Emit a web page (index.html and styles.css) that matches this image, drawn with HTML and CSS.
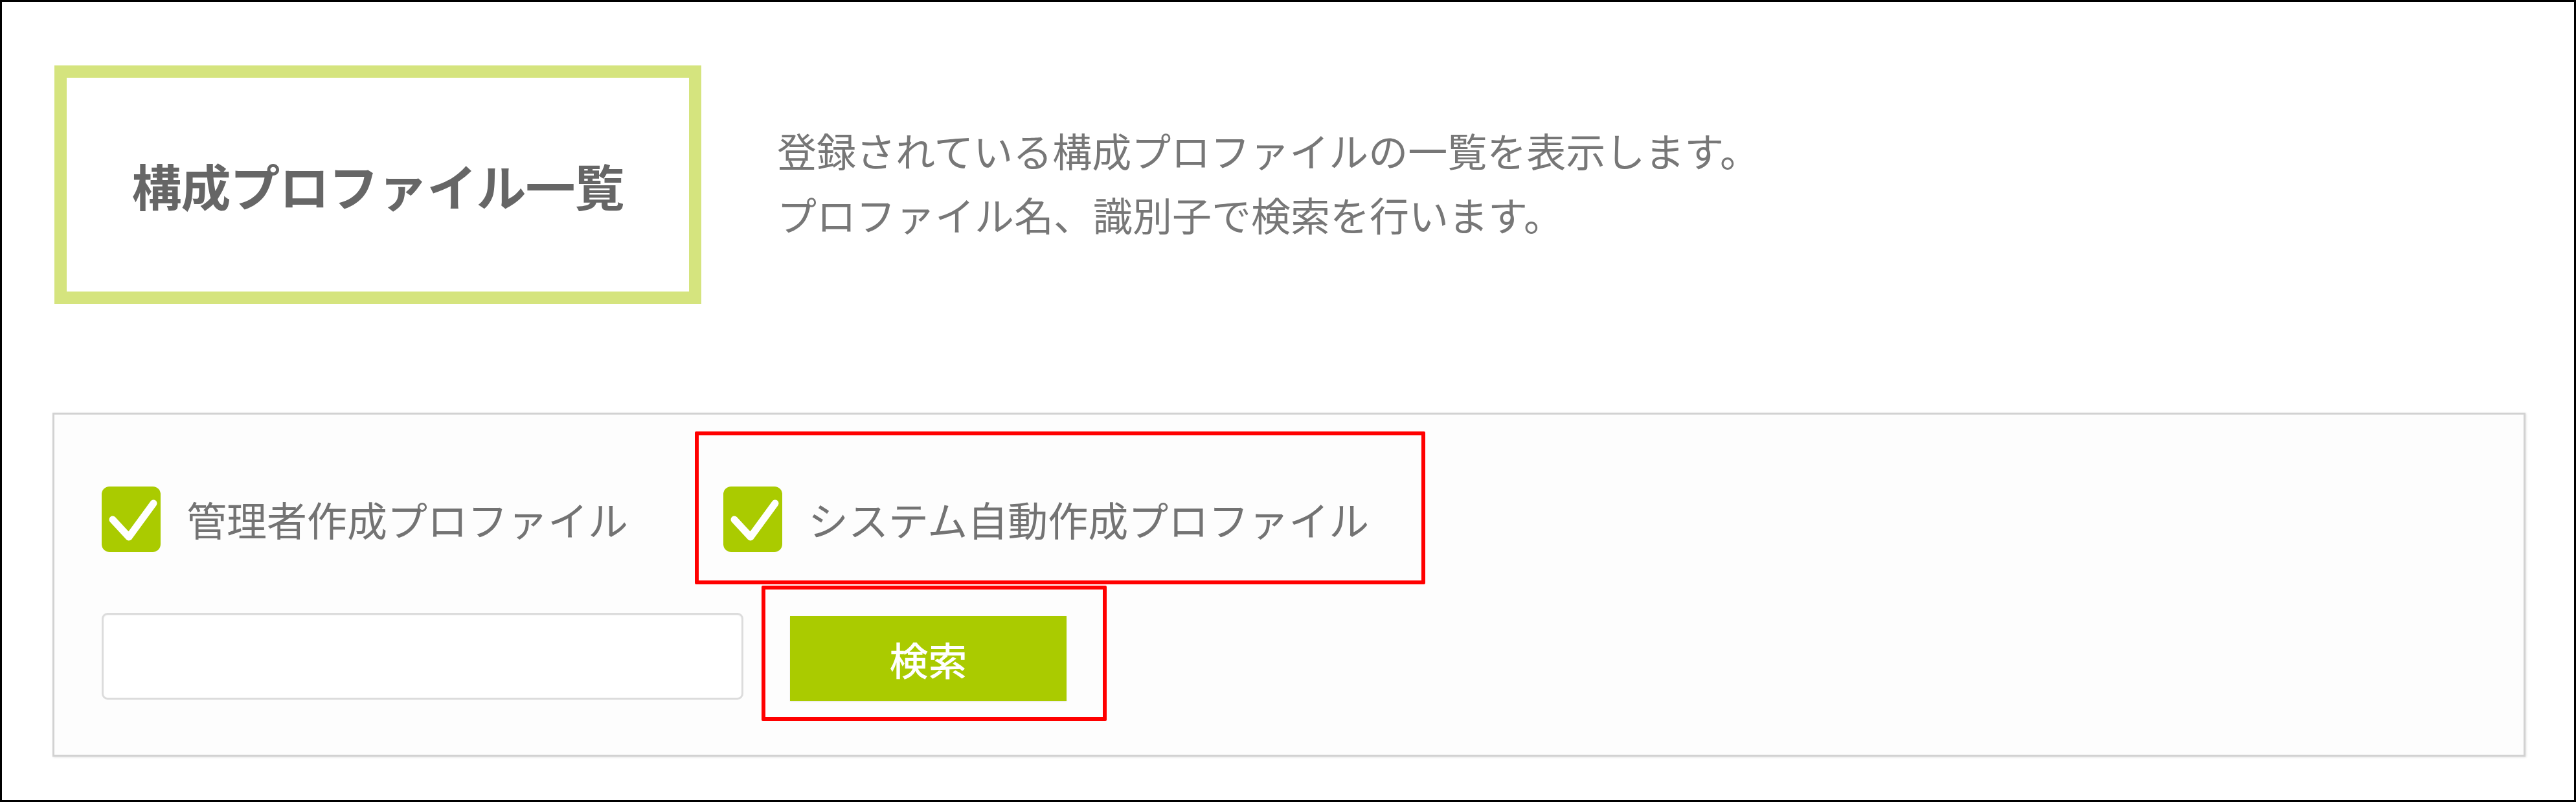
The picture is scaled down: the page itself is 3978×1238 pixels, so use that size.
FILE: index.html
```html
<!DOCTYPE html>
<html lang="ja">
<head>
  <meta charset="UTF-8" />
  <title>構成プロファイル一覧</title>
  <link rel="stylesheet" href="styles.css">
</head>
<body>
  <div class="frame">

    <div class="header">
      <div class="title-box">構成プロファイル一覧</div>
      <div class="intro">
        <p>登録されている構成プロファイルの一覧を表示します。</p>
        <p>プロファイル名、識別子で検索を行います。</p>
      </div>
    </div>

    <div class="search-panel">
      <div class="check-row">
        <label class="check">
          <span class="box">
            <svg viewBox="0 0 90 102" width="90" height="102"><path d="M17 51 L42 78 L80 26" fill="none" stroke="#fff" stroke-width="11" stroke-linecap="round" stroke-linejoin="round"/></svg>
          </span>
          管理者作成プロファイル
        </label>
        <label class="check">
          <span class="box">
            <svg viewBox="0 0 90 102" width="90" height="102"><path d="M17 51 L42 78 L80 26" fill="none" stroke="#fff" stroke-width="11" stroke-linecap="round" stroke-linejoin="round"/></svg>
          </span>
          システム自動作成プロファイル
        </label>
      </div>
      <div class="query-row">
        <input type="text" class="query">
        <button class="search-btn">検索</button>
      </div>

      <!-- annotation marks -->
      <div class="mark mark-check"></div>
      <div class="mark mark-btn"></div>
    </div>

  </div>
</body>
</html>
```

FILE: styles.css
```css
* { margin: 0; padding: 0; box-sizing: border-box; }
body { background: #fff; font-family: 'Noto Sans CJK JP', 'Noto Sans', sans-serif; }

.frame {
  width: 3978px;
  height: 1238px;
  border: 3px solid #000;
  padding: 98px 75px 0 78px;
}

.header {
  display: flex;
  align-items: center;
  margin-left: 3px;
  height: 368px;
}

.title-box {
  width: 999px;
  height: 368px;
  border: 19px solid #d5e47e;
  display: flex;
  align-items: center;
  justify-content: center;
  font-size: 77px;
  font-weight: bold;
  color: #666;
  letter-spacing: -1px;
}

.intro {
  margin-left: 117px;
  margin-top: -8px;
  font-size: 61px;
  line-height: 99px;
  color: #777;
}

.search-panel {
  position: relative;
  margin-top: 168px;
  border: 3px solid #d2d2d2;
  box-shadow: 1px 1px 3px rgba(0,0,0,0.12);
  background: #fdfdfd;
  padding: 110px 73px 83px 73px;
}

.check-row {
  display: flex;
  align-items: center;
  gap: 147px;
}

.check {
  display: flex;
  align-items: center;
  gap: 40px;
  font-size: 62px;
  color: #737373;
  line-height: 102px;
}

.box {
  width: 91px;
  height: 101px;
  background: #aacb00;
  border-radius: 12px;
  display: block;
}

.box svg { display: block; }

.query-row {
  display: flex;
  align-items: center;
  gap: 72px;
  margin-top: 92px;
}

.query {
  width: 991px;
  height: 134px;
  border: 3px solid #dcdcdc;
  border-radius: 9px;
  background: #fff;
  box-shadow: inset 0 1px 2px rgba(0,0,0,0.05);
}

.search-btn {
  width: 427px;
  height: 131px;
  margin-top: 7px;
  background: #aacb00;
  border: none;
  color: #fff;
  font-family: 'Noto Sans CJK JP', sans-serif;
  font-size: 60px;
  font-weight: 500;
  box-shadow: 0 1px 2px rgba(0,0,0,0.1);
}

.mark {
  position: absolute;
  border: 6px solid #ff0000;
  border-radius: 2px;
}

.mark-check { left: 989px; top: 26px; width: 1128px; height: 236px; }
.mark-btn { left: 1092px; top: 264px; width: 533px; height: 209px; }
```
